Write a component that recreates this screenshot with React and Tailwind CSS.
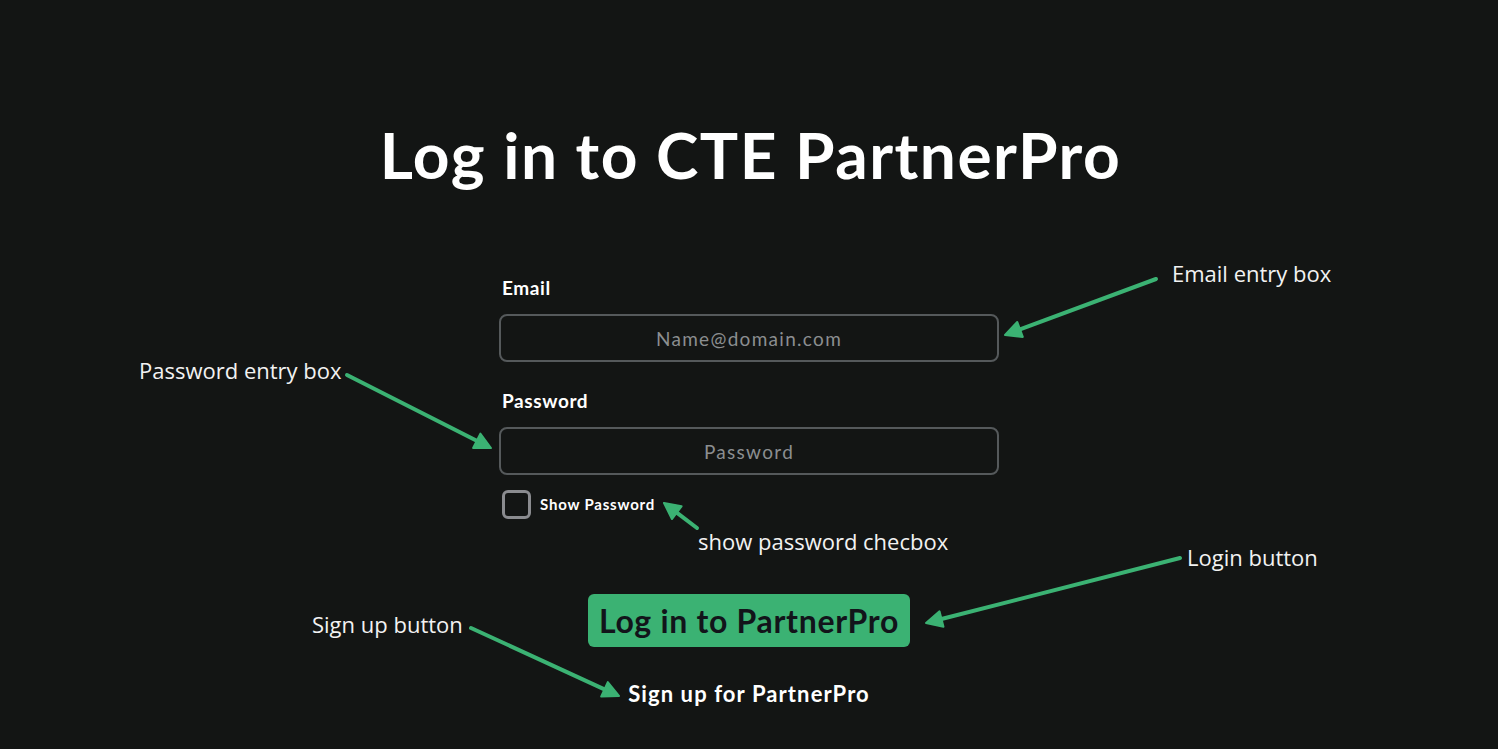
import React, { useState } from 'react';

const UI_FONT = { fontFamily: '"Lato", "Noto Sans", sans-serif' };
const NOTE_FONT = { fontFamily: '"Open Sans", "Noto Sans", sans-serif' };

const Arrow = ({ x1, y1, x2, y2 }) => {
  const angle = Math.atan2(y2 - y1, x2 - x1);
  const len = 16;
  const half = 8;
  const bx = x2 - len * Math.cos(angle);
  const by = y2 - len * Math.sin(angle);
  const px = -Math.sin(angle) * half;
  const py = Math.cos(angle) * half;
  return (
    <g>
      <line x1={x1} y1={y1} x2={bx} y2={by} stroke="#3bb273" strokeWidth="4" strokeLinecap="round" />
      <polygon
        points={`${x2},${y2} ${bx + px},${by + py} ${bx - px},${by - py}`}
        fill="#3bb273"
        stroke="#3bb273"
        strokeWidth="2"
        strokeLinejoin="round"
      />
    </g>
  );
};

const Note = ({ className, children }) => (
  <div className={`absolute text-[22px] leading-7 text-[#f2f2f2] whitespace-nowrap ${className}`} style={NOTE_FONT}>
    {children}
  </div>
);

export default function App() {
  const [showPassword, setShowPassword] = useState(false);

  return (
    <div className="relative w-full h-[749px] bg-[#131514] overflow-hidden" style={UI_FONT}>
      <div className="flex flex-col items-center pt-[115px]">
        <h1 className="text-[64px] leading-[80px] font-bold tracking-[1.5px] pl-[3px] text-white">Log in to CTE PartnerPro</h1>

        <form className="w-[500px] mt-[81px] flex flex-col" onSubmit={(e) => e.preventDefault()}>
          <label className="pl-[3px] text-[19px] leading-6 font-bold tracking-[0.6px] text-white">Email</label>
          <input
            type="email"
            placeholder="Name@domain.com"
            className="mt-[14px] h-[48px] w-full rounded-lg border-2 border-[#55595b] bg-transparent text-center text-[19px] tracking-[1.3px] text-white placeholder:text-[#8b8e90] outline-none"
            style={UI_FONT}
          />

          <label className="mt-[27px] pl-[3px] text-[19px] leading-6 font-bold tracking-[0.6px] text-white">Password</label>
          <input
            type={showPassword ? 'text' : 'password'}
            placeholder="Password"
            className="mt-[14px] h-[48px] w-full rounded-lg border-2 border-[#55595b] bg-transparent text-center text-[19px] tracking-[1.3px] text-white placeholder:text-[#8b8e90] outline-none"
            style={UI_FONT}
          />

          <label className="mt-[15px] ml-[3px] flex items-center gap-[9px] cursor-pointer">
            <span
              onClick={() => setShowPassword(!showPassword)}
              className={`w-[29px] h-[29px] rounded-md border-[3px] border-[#8a8b8f] ${showPassword ? 'bg-[#3bb273]' : ''}`}
            />
            <span className="text-[15px] font-bold tracking-[0.8px] text-white">Show Password</span>
          </label>

          <div className="mt-[75px] flex justify-center">
            <button className="h-[53px] w-[322px] rounded-md bg-[#3bb273] text-[32px] font-bold tracking-[0.7px] text-[#12141a]">
              Log in to PartnerPro
            </button>
          </div>

          <div className="mt-[33px] flex justify-center">
            <button type="button" className="text-[22px] leading-7 font-bold tracking-[1.1px] text-white">Sign up for PartnerPro</button>
          </div>
        </form>
      </div>

      <svg className="absolute inset-0 pointer-events-none" width="1498" height="749">
        <Arrow x1={1156} y1={279} x2={1005} y2={335} />
        <Arrow x1={347} y1={375} x2={491} y2={448} />
        <Arrow x1={697} y1={528} x2={664} y2={503} />
        <Arrow x1={1180} y1={558} x2={926} y2={623} />
        <Arrow x1={471} y1={628} x2={619} y2={696} />
      </svg>

      <Note className="left-[1172px] top-[259px]">Email entry box</Note>
      <Note className="left-[139px] top-[356px]">Password entry box</Note>
      <Note className="left-[698px] top-[527px]">show password checbox</Note>
      <Note className="left-[1187px] top-[543px]">Login button</Note>
      <Note className="left-[312px] top-[610px]">Sign up button</Note>
    </div>
  );
}
